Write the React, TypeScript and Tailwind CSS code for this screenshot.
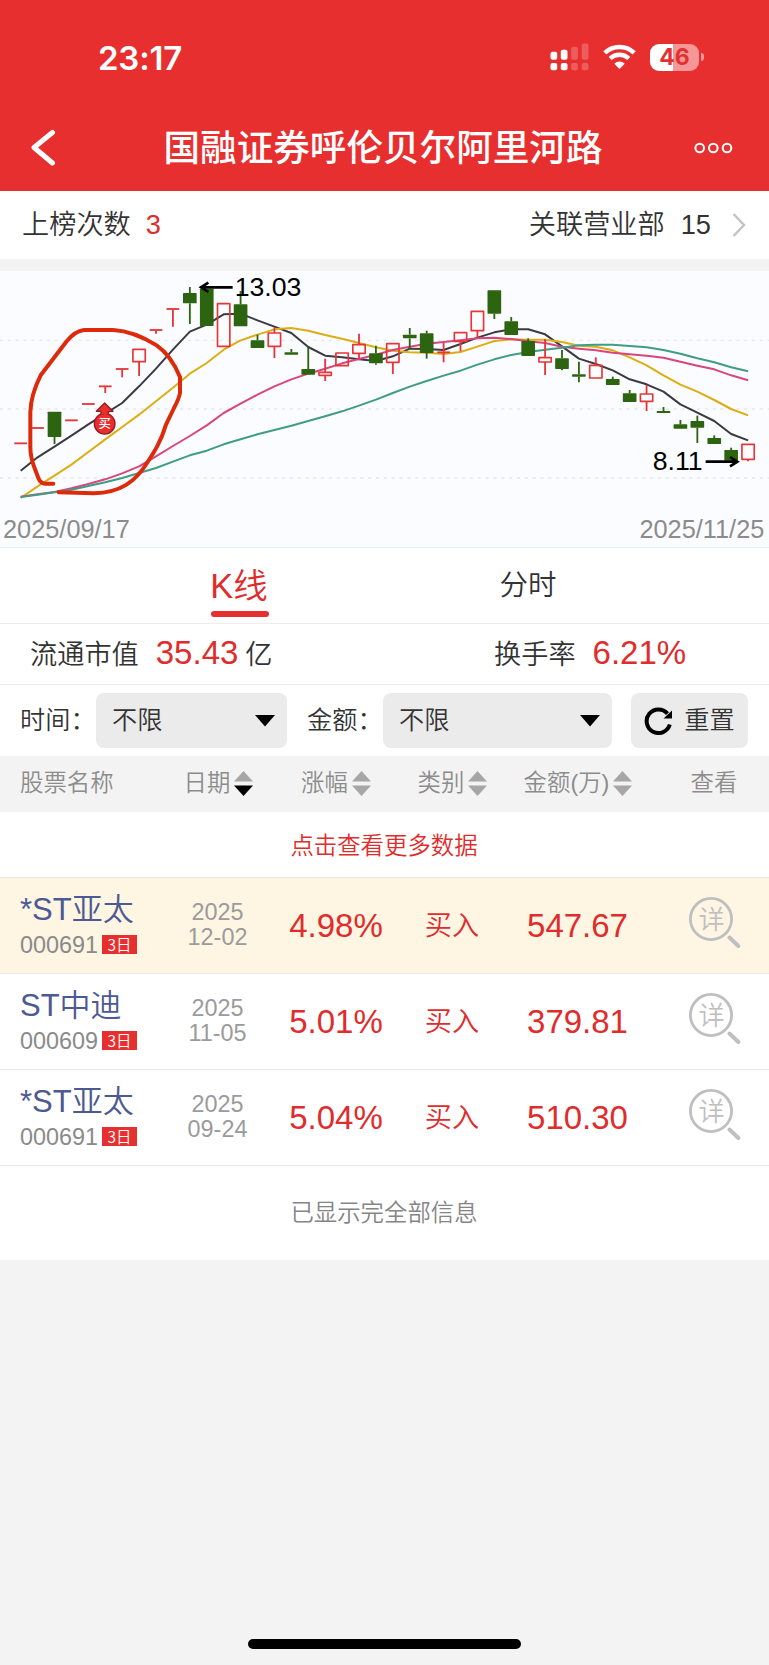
const RED = '#e82f2f';
const CANDLE_RED = '#e53638';
const CANDLE_GREEN = '#2d6410';

type Candle = {
  up: boolean;
  top: number;
  bottom?: number;
  high?: number;
  low?: number;
};

const candles: Candle[] = [
  { up: true, top: 544 },
  { up: true, top: 498 },
  { up: false, top: 449, bottom: 525, low: 546 },
  { up: true, top: 475 },
  { up: true, top: 426 },
  { up: true, top: 373, low: 393 },
  { up: true, top: 321, low: 346 },
  { up: true, top: 262, bottom: 299, low: 342 },
  { up: true, top: 204, low: 215 },
  { up: true, top: 141, low: 194 },
  { up: false, top: 93, bottom: 124, high: 75, low: 186 },
  { up: false, top: 80, bottom: 192 },
  { up: true, top: 125, bottom: 253 },
  { up: false, top: 127, bottom: 193, high: 87 },
  { up: false, top: 235, bottom: 258, high: 218 },
  { up: true, top: 213, bottom: 253, high: 196, low: 288 },
  { up: false, top: 271, bottom: 278, high: 261 },
  { up: false, top: 321, bottom: 338, high: 255 },
  { up: true, top: 331, bottom: 340, high: 290, low: 357 },
  { up: true, top: 273, bottom: 311 },
  { up: true, top: 248, bottom: 274, high: 215, low: 291 },
  { up: false, top: 274, bottom: 304, high: 251, low: 308 },
  { up: true, top: 245, bottom: 301, low: 336 },
  { up: false, top: 218, bottom: 229, high: 198, low: 262 },
  { up: false, top: 214, bottom: 273, high: 206, low: 290 },
  { up: true, top: 271, high: 243, low: 301 },
  { up: true, top: 212, bottom: 238, low: 268 },
  { up: true, top: 148, bottom: 206, low: 226 },
  { up: false, top: 85, bottom: 155, low: 171 },
  { up: false, top: 178, bottom: 219, high: 165 },
  { up: false, top: 237, bottom: 282, high: 229 },
  { up: true, top: 287, bottom: 300, high: 231, low: 339 },
  { up: false, top: 289, bottom: 321, high: 264, low: 325 },
  { up: false, top: 337, bottom: 344, high: 299, low: 361 },
  { up: true, top: 310, bottom: 348, high: 286 },
  { up: false, top: 351, bottom: 369, high: 344 },
  { up: false, top: 394, bottom: 420, high: 384 },
  { up: true, top: 396, bottom: 418, high: 369, low: 447 },
  { up: false, top: 447, bottom: 453, high: 435 },
  { up: false, top: 487, bottom: 500, high: 474 },
  { up: false, top: 477, bottom: 497, high: 461, low: 543 },
  { up: false, top: 528, bottom: 546, high: 520 },
  { up: false, top: 564, bottom: 596, high: 557 },
  { up: true, top: 547, bottom: 592, low: 598 },
];

const averages = [
  {
    color: '#3a3a40',
    values: [
      626, 586, 554, 521, 487, 455, 423, 373, 320, 263, 209, 188, 157, 155, 175, 194, 213, 255, 281,
      286, 292, 297, 283, 260, 261, 264, 246, 227, 211, 202, 202, 217, 253, 290, 306, 325, 352, 367,
      389, 427, 452, 477, 516, 535,
    ],
  },
  {
    color: '#dcae12',
    values: [
      708, 673, 641, 608, 570, 532, 495, 458, 418, 377, 335, 303, 263, 235, 218, 202, 198, 206, 219,
      230, 243, 256, 266, 271, 272, 276, 270, 254, 237, 232, 233, 233, 240, 251, 254, 265, 286, 310,
      340, 368, 389, 414, 441, 460,
    ],
  },
  {
    color: '#d9457f',
    values: [
      704, 697, 690, 679, 666, 652, 634, 613, 583, 552, 522, 490, 453, 425, 398, 373, 352, 335, 320,
      304, 291, 278, 264, 254, 245, 240, 235, 229, 227, 231, 238, 243, 254, 260, 265, 272, 277, 281,
      287, 299, 311, 322, 340, 355,
    ],
  },
  {
    color: '#3f9d83',
    values: [
      705, 698, 691, 683, 672, 661, 648, 633, 618, 599, 580, 566, 547, 532, 517, 504, 491, 477, 463,
      448, 431, 413, 393, 374, 357, 341, 326, 308, 292, 279, 270, 263, 257, 250, 248, 248, 252, 256,
      264, 275, 289, 301, 316, 328,
    ],
  },
];

const columns = [
  { label: '日期', sort: 'desc' },
  { label: '涨幅', sort: 'none' },
  { label: '类别', sort: 'none' },
  { label: '金额(万)', sort: 'none' },
];

const rows = [
  { name: '*ST亚太', code: '000691', year: '2025', day: '12-02', change: '4.98%', side: '买入', amount: '547.67' },
  { name: 'ST中迪', code: '000609', year: '2025', day: '11-05', change: '5.01%', side: '买入', amount: '379.81' },
  { name: '*ST亚太', code: '000691', year: '2025', day: '09-24', change: '5.04%', side: '买入', amount: '510.30' },
];

const gridCols = 'grid grid-cols-[160px_117px_118px_115px_136px_123px] items-center';

const xAt = (i: number) => 62 + i * 50.75;

function StatusBar() {
  return (
    <div className="flex h-[98px] items-start justify-between pt-[38px] pr-[65px] pl-[98px]">
      <span className="font-['Inter'] text-[33px] leading-[40px] font-semibold tracking-[-0.2px]">23:17</span>
      <div className="flex items-center gap-[14px] pt-[5px]">
        <svg width="39" height="28" viewBox="0 0 39 28" fill="#fff">
          <rect x="0.5" y="8.8" width="6.7" height="8" rx="2" />
          <rect x="0.5" y="20" width="6.7" height="7.3" rx="2" />
          <rect x="10.8" y="6.8" width="6.7" height="10" rx="2" />
          <rect x="10.8" y="20" width="6.7" height="7.3" rx="2" />
          <g opacity="0.22">
            <rect x="21.2" y="3.8" width="6.7" height="13" rx="2" />
            <rect x="21.2" y="20" width="6.7" height="7.3" rx="2" />
            <rect x="31.7" y="0.6" width="6.7" height="16.2" rx="2" />
            <rect x="31.7" y="20" width="6.7" height="7.3" rx="2" />
          </g>
        </svg>
        <svg width="33" height="28" viewBox="0 0 33 28" fill="none" stroke="#fff" strokeWidth="4.4">
          <path d="M1.8 9.8 A21.5 21.5 0 0 1 31.2 9.8" />
          <path d="M7.2 15.5 A13.6 13.6 0 0 1 25.8 15.5" />
          <path d="M16.5 26 L11.3 20.7 A7.4 7.4 0 0 1 21.7 20.7 Z" fill="#fff" stroke="none" />
        </svg>
        <div className="flex items-center gap-[2px]">
          <div className="flex h-[27px] w-[49px] items-center justify-center rounded-[9px] bg-[linear-gradient(to_right,#fff_47%,#f59797_47%)] font-['Inter'] text-[23px] leading-none font-bold text-[#e13232]">
            46
          </div>
          <div className="h-[8px] w-[3px] rounded-r-full bg-[#f59797]" />
        </div>
      </div>
    </div>
  );
}

function Header() {
  return (
    <header className="h-[191px] bg-[#e82f2f] text-white">
      <StatusBar />
      <div className="flex items-center justify-between pr-[36px] pl-[30px]">
        <svg width="60" height="38" viewBox="0 0 60 38" fill="none" stroke="#fff" strokeWidth="5" strokeLinecap="round" strokeLinejoin="round">
          <path d="M22.5 3.5 L4 18.5 L22.5 34" />
        </svg>
        <h1 className="pt-[2px] pl-[3px] text-[36.6px] leading-[98px] font-medium">国融证券呼伦贝尔阿里河路</h1>
        <svg width="60" height="12" viewBox="0 0 60 12" fill="none" stroke="#fff" strokeWidth="2">
          <circle cx="26.7" cy="6" r="4.3" />
          <circle cx="40.3" cy="6" r="4.3" />
          <circle cx="54" cy="6" r="4.3" />
        </svg>
      </div>
    </header>
  );
}

function CandleShape({ candle, x }: { candle: Candle; x: number }) {
  const color = candle.up ? CANDLE_RED : CANDLE_GREEN;
  const bottom = candle.bottom ?? candle.top;
  return (
    <g stroke={color} strokeWidth="5.5">
      {candle.high !== undefined && <line x1={x} x2={x} y1={candle.high} y2={candle.top} />}
      {candle.low !== undefined && <line x1={x} x2={x} y1={bottom} y2={candle.low} />}
      {candle.bottom === undefined ? (
        <line x1={x - 19} x2={x + 19} y1={candle.top} y2={candle.top} />
      ) : candle.up ? (
        <rect x={x - 18.5} y={candle.top} width="37" height={bottom - candle.top} fill="none" strokeWidth="5" strokeLinejoin="round" />
      ) : (
        <rect x={x - 20.5} y={candle.top} width="41" height={bottom - candle.top} rx="2" fill={color} stroke="none" />
      )}
    </g>
  );
}

function KLineChart() {
  return (
    <svg viewBox="0 27 2307 828" className="block h-[276px] w-full bg-[#fbfcff]">
      <g stroke="#e6e7ea" strokeWidth="4" strokeDasharray="9 14.5">
        <line x1="0" x2="2307" y1="235" y2="235" />
        <line x1="0" x2="2307" y1="441" y2="441" />
        <line x1="0" x2="2307" y1="648" y2="648" />
      </g>

      {averages.map((line) => (
        <polyline
          key={line.color}
          points={line.values.map((v, i) => `${xAt(i)},${v}`).join(' ')}
          fill="none"
          stroke={line.color}
          strokeWidth="6"
          strokeLinejoin="round"
        />
      ))}

      {candles.map((candle, i) => (
        <CandleShape key={i} candle={candle} x={xAt(i)} />
      ))}

      {/* High / low labels */}
      <g stroke="#000" strokeWidth="8" fill="none">
        <path d="M698 76 H606 M625 62 L603 76 L625 90" />
        <path d="M2117 599 H2209 M2190 585 L2212 599 L2190 613" />
      </g>
      <g fontSize="80" fill="#000">
        <text x="704" y="103">13.03</text>
        <text x="1958" y="625">8.11</text>
      </g>
      <g fontSize="76" fill="#8c8c8c">
        <text x="9" y="828">2025/09/17</text>
        <text x="2293" y="828" textAnchor="end">2025/11/25</text>
      </g>

      {/* Buy marker */}
      <g fill={RED} stroke="#9c1a1c" strokeWidth="4" strokeLinejoin="round">
        <circle cx="314" cy="485" r="31" />
        <path d="M303 457 V448 H289 L314 423 L339 448 H325 V457" />
      </g>
      <text x="314" y="498" fontSize="37" fontWeight="500" fill="#fff" textAnchor="middle">买</text>

      {/* Hand-drawn ring */}
      <path
        d="M160 665 H136 Q122 665 115 648 L103 616 Q91 585 91 555 V450 Q93 397 122 340 L200 238 Q225 207 252 204 H340 C392 207 436 229 470 250 C505 274 528 316 540 345 V393 Q537 410 522 438 L498 488 C482 541 462 571 441 603 C406 659 362 692 282 694 L176 691"
        fill="none"
        stroke="#dd2a0a"
        strokeWidth="12"
        strokeLinecap="round"
        strokeLinejoin="round"
      />
    </svg>
  );
}

function Select({ value, className }: { value: string; className: string }) {
  return (
    <div className={`flex h-[55px] items-center justify-between rounded-lg bg-[#ebebeb] pr-3 pl-4 ${className}`}>
      <span>{value}</span>
      <svg width="20" height="12" viewBox="0 0 20 12">
        <path d="M0 0 H20 L10 11.5 Z" fill="#000" />
      </svg>
    </div>
  );
}

function SortIcon({ sort }: { sort: string }) {
  return (
    <svg width="19" height="25" viewBox="0 0 19 25">
      <path d="M9.5 0 L19 10.5 H0 Z" fill="#a6a6a6" />
      <path d="M9.5 25 L0 14.5 H19 Z" fill={sort === 'desc' ? '#000' : '#a6a6a6'} />
    </svg>
  );
}

function DetailIcon() {
  return (
    <svg width="52" height="52" viewBox="0 0 52 52" fill="none" stroke="#bfbfbf">
      <circle cx="22" cy="22" r="20.6" strokeWidth="2.8" />
      <path d="M40.5 40.5 L49.3 49" strokeWidth="4" strokeLinecap="round" />
      <text x="22.5" y="31.7" fontSize="26" fill="#bfbfbf" stroke="none" textAnchor="middle">详</text>
    </svg>
  );
}

export default function App() {
  return (
    <div
      lang="zh-CN"
      className="flex min-h-[1665px] w-[769px] flex-col bg-[#f3f3f3] font-['Liberation_Sans','Noto_Sans_CJK_SC',sans-serif] text-[27.2px] font-[350] text-[#333]"
    >
      <Header />

      <div className="mb-3 flex h-[68px] items-center justify-between bg-white pr-[23px] pl-[22px]">
        <div className="flex items-center gap-[15px]">
          <span>上榜次数</span>
          <span className="text-[#e02c2c]">3</span>
        </div>
        <div className="flex items-center">
          <span>关联营业部</span>
          <span className="ml-4">15</span>
          <svg className="ml-[21px]" width="14" height="24" viewBox="0 0 14 24" fill="none" stroke="#c4c4c4" strokeWidth="2.5">
            <path d="M1.5 1 L12 12 L1.5 23" />
          </svg>
        </div>
      </div>

      <KLineChart />

      {/* Tabs */}
      <div className="flex h-[77px] justify-center border-t border-b border-[#ececee] bg-white">
        <div className="flex w-[288px] flex-col items-center pr-[2px]">
          <span className="pt-[13px] pr-px text-[34.4px] leading-[50px] text-[#e02c2c]">K线</span>
          <div className="h-[6px] w-[58px] rounded-full bg-[#e82f2f]" />
        </div>
        <div className="w-[288px] pt-[12px] pr-px text-center text-[28.5px] leading-[51px]">分时</div>
      </div>

      <div className="flex h-[61px] items-center border-b border-[#ededed] bg-white pb-[2px] pl-[30px]">
        <div className="flex w-[464px] items-baseline">
          <span>流通市值</span>
          <span className="ml-[17px] text-[33px] text-[#e02c2c]">35.43</span>
          <span className="ml-[7px]">亿</span>
        </div>
        <div className="flex items-baseline">
          <span>换手率</span>
          <span className="ml-[17px] text-[33px] text-[#e02c2c]">6.21%</span>
        </div>
      </div>

      {/* Filters */}
      <div className="flex h-[71px] items-center bg-white pl-[20px] text-[25.2px]">
        <span className="w-[76px] whitespace-nowrap">时间：</span>
        <Select value="不限" className="w-[191px]" />
        <span className="ml-[20px] w-[76px] whitespace-nowrap">金额：</span>
        <Select value="不限" className="w-[229px]" />
        <button className="ml-[19px] flex h-[55px] w-[117px] items-center justify-center gap-[11px] rounded-lg bg-[#ebebeb]">
          <svg width="29" height="28" viewBox="0 0 29 28" fill="none" stroke="#000" strokeWidth="4">
            <path d="M25.8 17.5 A11.8 11.8 0 1 1 23.5 6.6" />
            <path d="M28 3.5 V11.5 H19.5 Z" fill="#000" stroke="none" />
          </svg>
          <span>重置</span>
        </button>
      </div>

      {/* Table */}
      <div className={`${gridCols} h-[56px] bg-[#f3f3f3] text-[23.4px] text-[#8c8c8c]`}>
        <span className="pl-[20px]">股票名称</span>
        {columns.map((col) => (
          <div key={col.label} className="flex items-center justify-center gap-1">
            <span>{col.label}</span>
            <SortIcon sort={col.sort} />
          </div>
        ))}
        <span className="pl-[13px] text-center">查看</span>
      </div>

      <div className="flex h-[66px] items-center justify-center border-b border-[#e8e8e8] bg-white pt-[4px] pr-px text-[23.4px] text-[#e02c2c]">
        点击查看更多数据
      </div>

      {rows.map((row, idx) => (
        <div
          key={idx}
          className={`${gridCols} h-[96px] border-b border-[#ebebeb] ${idx === 0 ? 'bg-[#fef5e3]' : 'bg-white'}`}
        >
          <div className="pb-[2px] pl-[20px]">
            <div className="text-[31px] leading-[40px] text-[#4c5a94]">{row.name}</div>
            <div className="flex items-center gap-1 text-[23.4px] leading-[30px] text-[#8a8a8a]">
              <span>{row.code}</span>
              <span className="flex h-[19px] w-[35px] items-center justify-center bg-[#e82f2f] font-['Noto_Sans_CJK_SC',sans-serif] text-[15.5px] leading-none text-white">
                3日
              </span>
            </div>
          </div>
          <div className="pr-[2px] pb-px text-center text-[23.4px] leading-[25.5px] text-[#9b9b9b]">
            {row.year}
            <br />
            {row.day}
          </div>
          <div className="text-center text-[33px] text-[#e02c2c]">{row.change}</div>
          <div className="pt-[2px] pr-px text-center text-[#e02c2c]">{row.side}</div>
          <div className="pr-px text-center text-[33px] text-[#e02c2c]">{row.amount}</div>
          <div className="flex justify-center pb-[6px] pl-[14px]">
            <DetailIcon />
          </div>
        </div>
      ))}

      <div className="flex h-[94px] items-center justify-center bg-white pt-[2px] pr-px text-[23.4px] text-[#858585]">
        已显示完全部信息
      </div>

      {/* Home indicator */}
      <div className="mx-auto mt-auto mb-[16px] h-[10px] w-[273px] rounded-full bg-black" />
    </div>
  );
}
